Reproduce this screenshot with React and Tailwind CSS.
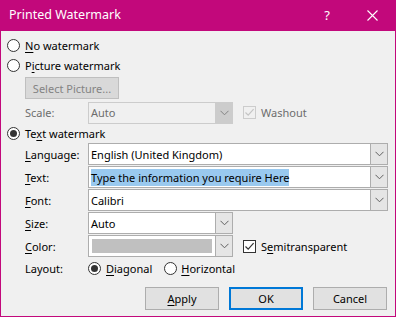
import React from "react";

const font = { fontFamily: '"Segoe UI", "Noto Sans", sans-serif' };

function Radio({ checked }) {
  return (
    <span className="relative inline-flex h-[13px] w-[13px] shrink-0 items-center justify-center rounded-full border border-[#333333] bg-white">
      {checked && <span className="h-[7px] w-[7px] rounded-full bg-[#333333]" />}
    </span>
  );
}

function Check({ checked, disabled }) {
  return (
    <span
      className={
        "inline-flex h-[13px] w-[13px] shrink-0 items-center justify-center border " +
        (disabled ? "border-[#cccccc] bg-[#f0f0f0]" : "border-[#333333] bg-white")
      }
    >
      {checked && (
        <svg width="11" height="11" viewBox="0 0 11 11">
          <path
            d="M1.5 5.5 L4.2 8.2 L9.6 2.2"
            fill="none"
            stroke={disabled ? "#c4c4c4" : "#333333"}
            strokeWidth="1.2"
          />
        </svg>
      )}
    </span>
  );
}

function Chevron({ color }) {
  return (
    <svg width="9" height="6" viewBox="0 0 9 6">
      <path d="M0.5 0.8 L4.5 4.8 L8.5 0.8" fill="none" stroke={color} strokeWidth="1" />
    </svg>
  );
}

function Combo({ wide, disabled, children }) {
  return (
    <div
      className={
        "flex h-[22px] items-stretch border " +
        (wide ? "w-[300px] " : "w-[145px] ") +
        (disabled ? "border-[#cccccc] bg-[#f0f0f0]" : "border-[#adadad] bg-white")
      }
    >
      <div className="flex min-w-0 flex-1 items-center pl-[2px]">{children}</div>
      <div
        className={
          "flex w-[17px] items-center justify-center border-l " +
          (disabled ? "border-[#cccccc] bg-[#cccccc]" : "border-[#adadad] bg-[#e5e5e5]")
        }
      >
        <Chevron color={disabled ? "#838383" : "#606060"} />
      </div>
    </div>
  );
}

function U({ children }) {
  return <span className="underline underline-offset-[1.5px]">{children}</span>;
}

function Label({ children, disabled }) {
  return (
    <div className={"w-[63px] shrink-0 " + (disabled ? "text-[#6d6d6d]" : "")}>{children}</div>
  );
}

function Btn({ children, primary }) {
  return (
    <div
      className={
        "flex h-[23px] w-[74px] items-center justify-center bg-[#e1e1e1] " +
        (primary ? "border-2 border-[#0078d7]" : "border border-[#adadad]")
      }
    >
      {children}
    </div>
  );
}

export default function App() {
  return (
    <div
      className="flex h-[317px] w-[396px] flex-col bg-[#c2087b] text-[11px] leading-none text-black"
      style={font}
    >
      <div className="flex h-[31px] shrink-0 items-center text-white">
        <div className="flex-1 pl-[9px] text-[12.5px]">Printed Watermark</div>
        <div className="w-[46px] text-center text-[13px]">?</div>
        <div className="flex w-[46px] items-center justify-center pr-[2px]">
          <svg width="11" height="11" viewBox="0 0 11 11">
            <path d="M0.5 0.5 L10.5 10.5 M10.5 0.5 L0.5 10.5" stroke="white" strokeWidth="1.1" />
          </svg>
        </div>
      </div>
      <div className="mx-px mb-px flex flex-1 flex-col bg-[#f0f0f0] pl-[6px]">
        <div className="mt-[4px] flex h-[20px] items-center gap-[5px]">
          <Radio />
          <span>
            <U>N</U>o watermark
          </span>
        </div>
        <div className="flex h-[20px] items-center gap-[5px]">
          <Radio />
          <span>
            P<U>i</U>cture watermark
          </span>
        </div>
        <div className="mt-[2px] pl-[18px]">
          <div className="flex h-[22px] w-[94px] items-center justify-center border border-[#bfbfbf] bg-[#d9d9d9] text-[#838383]">
            Select Picture...
          </div>
        </div>
        <div className="mt-[3px] flex h-[21px] items-center pl-[18px]">
          <Label disabled>Scale:</Label>
          <Combo disabled>
            <span className="text-[#6d6d6d]">Auto</span>
          </Combo>
          <div className="ml-[10px] flex items-center gap-[5px] text-[#6d6d6d]">
            <Check checked disabled />
            <span>Washout</span>
          </div>
        </div>
        <div className="flex h-[20px] items-center gap-[5px]">
          <Radio checked />
          <span>
            Te<U>x</U>t watermark
          </span>
        </div>
        <div className="flex flex-col gap-px pl-[18px]">
          <div className="flex items-center">
            <Label>
              <U>L</U>anguage:
            </Label>
            <Combo wide>English (United Kingdom)</Combo>
          </div>
          <div className="flex items-center">
            <Label>
              <U>T</U>ext:
            </Label>
            <Combo wide>
              <span className="bg-[#99c9ef] py-[3px]">Type the information you require Here</span>
            </Combo>
          </div>
          <div className="flex items-center">
            <Label>
              <U>F</U>ont:
            </Label>
            <Combo wide>Calibri</Combo>
          </div>
          <div className="flex items-center">
            <Label>
              <U>S</U>ize:
            </Label>
            <Combo>Auto</Combo>
          </div>
          <div className="flex items-center">
            <Label>
              <U>C</U>olor:
            </Label>
            <Combo>
              <div className="mr-[3px] ml-[1px] h-[14px] flex-1 bg-[#c0c0c0]" />
            </Combo>
            <div className="ml-[10px] flex items-center gap-[5px]">
              <Check checked />
              <span>
                S<U>e</U>mitransparent
              </span>
            </div>
          </div>
          <div className="flex h-[21px] items-center">
            <Label>Layout:</Label>
            <div className="flex items-center gap-[5px]">
              <Radio checked />
              <span>
                <U>D</U>iagonal
              </span>
            </div>
            <div className="ml-[12px] flex items-center gap-[4px]">
              <Radio />
              <span>
                <U>H</U>orizontal
              </span>
            </div>
          </div>
        </div>
        <div className="mt-[8px] flex justify-end gap-[10px] pr-[8px]">
          <Btn>
            <span>
              <U>A</U>pply
            </span>
          </Btn>
          <Btn primary>OK</Btn>
          <Btn>Cancel</Btn>
        </div>
      </div>
    </div>
  );
}
